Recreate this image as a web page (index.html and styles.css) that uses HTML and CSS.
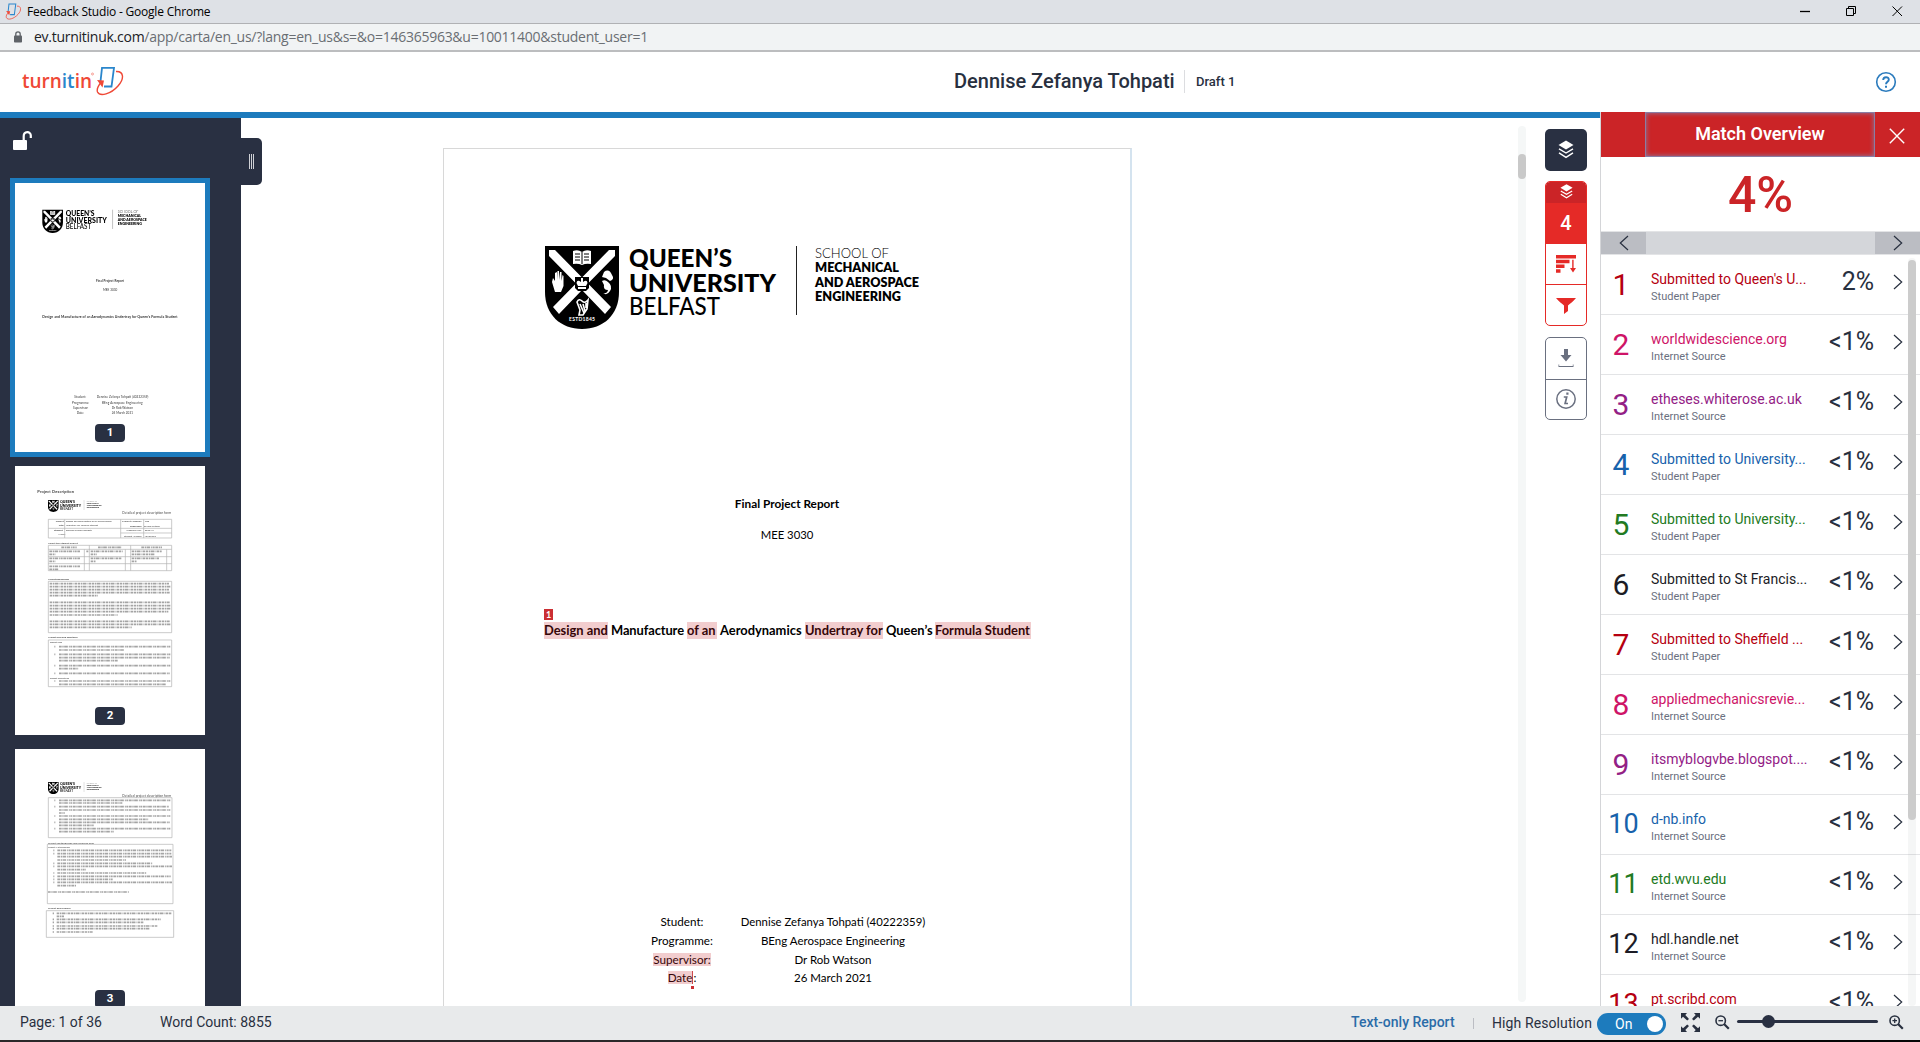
FILE: index.html
```html
<!DOCTYPE html>
<html lang="en">
<head>
<meta charset="utf-8">
<title>Feedback Studio</title>
<link rel="stylesheet" href="styles.css">
</head>
<body>
<svg class="defs" width="0" height="0" aria-hidden="true">
  <defs>
    <symbol id="crest" viewBox="0 0 74 83" overflow="visible">
      <path d="M0 0H74V46C74 69 58 83 37 83S0 69 0 46Z" fill="#000"/>
      <path d="M4 4H10L37 31.500L64 4H70V10L43 37.500L66 61L60 68L37 44L14 68L8 61L31 37.500L4 10Z" fill="#fff"/>
      <path d="M30 31H44V42L41 45H33L30 42Z" fill="#000"/>
      <path d="M31.500 37Q32 33 36 36V32H38V36Q42 33 42.500 37L41 40H33ZM33 41H41V43H33Z" fill="#fff"/>
      <path d="M28 5Q33 3 37 6Q41 3 46 5V18Q41 17 37 19Q33 17 28 18Z" fill="#fff"/>
      <path d="M37 6V18M30 8H35M30 11H35M30 14H35M39 8H44M39 11H44M39 14H44" stroke="#000" stroke-width="1"/>
      <path d="M10 46L7 36L8 32L10 35V27L12 26V34L12.500 25H14V34L15 26H16.500V35L17.500 29L18.500 30V40L16 46Z" fill="#fff"/>
      <path d="M59 26Q64 22 67 29Q70 33 65 35L61 32L57 31ZM57 35Q60 33 63 36Q68 40 65 45Q62 50 58 47Q62 48 63 44Q58 44 59 39Z" fill="#fff"/>
      <path d="M32 56Q34 52 37 55T43 54L42 63L38 69H34L35 64ZM35 58L39 67M38 58L40 65M41 57V62" fill="none" stroke="#fff" stroke-width="1.600"/>
      <text x="24" y="74.500" font-size="5" font-weight="700" fill="#fff" textLength="26">ESTD1845</text>
    </symbol>
    <symbol id="university" viewBox="0 0 374 83" overflow="visible">
      <use href="#crest" width="74" height="83"/>
      <g font-family="Lato, sans-serif" fill="#000">
        <text x="84" y="21" font-size="25.500" font-weight="900" textLength="103" lengthAdjust="spacingAndGlyphs">QUEEN’S</text>
        <text x="84" y="46" font-size="25.500" font-weight="900" textLength="147" lengthAdjust="spacingAndGlyphs">UNIVERSITY</text>
        <text x="84" y="69" font-size="24.500" font-weight="500" textLength="91" lengthAdjust="spacingAndGlyphs">BELFAST</text>
        <text x="270" y="12" font-size="13.500" font-weight="300" textLength="74" lengthAdjust="spacingAndGlyphs">SCHOOL OF</text>
        <text x="270" y="26" font-size="13" font-weight="800" textLength="84" lengthAdjust="spacingAndGlyphs">MECHANICAL</text>
        <text x="270" y="40.500" font-size="13" font-weight="800" textLength="104" lengthAdjust="spacingAndGlyphs">AND AEROSPACE</text>
        <text x="270" y="54.500" font-size="13" font-weight="800" textLength="86" lengthAdjust="spacingAndGlyphs">ENGINEERING</text>
      </g>
      <path d="M251.500 0V69" stroke="#222" stroke-width="1"/>
    </symbol>
    <symbol id="swirl" viewBox="0 0 28 30">
      <path d="M4.500 15.500L6 1.800H18L15.500 20.500H8" fill="none" stroke="#2a86cc" stroke-width="1.800"/>
      <path d="M20 5.500C28 5 28.500 13 22 20C15 28 4 31 1.500 26C.5 23 2 20 5 16.500" fill="none" stroke="#ef4836" stroke-width="1.400"/>
      <path d="M1 14L8 14.500L6.500 21.500Z" fill="#ef4836"/>
    </symbol>
    <symbol id="layers" viewBox="0 0 16 18">
      <path d="M8 0L15.500 4.500L8 9L.5 4.500Z" fill="#fff"/>
      <path d="M1 8.300L8 12.500L15 8.300M1 12.300L8 16.800L15 12.300" fill="none" stroke="#fff" stroke-width="1.400"/>
    </symbol>
    <symbol id="next" viewBox="0 0 10 16"><path d="M1 1L8.700 8L1 15" fill="none" stroke="#28303f" stroke-width="1.200"/></symbol>
  </defs>
</svg>

<div class="titlebar">
  <svg class="favicon"><use href="#swirl"/></svg>
  <span class="window-title">Feedback Studio - Google Chrome</span>
  <svg class="window-buttons" width="110" height="20" viewBox="0 0 110 20" fill="none" stroke="#000">
    <path d="M4 10.500H14" stroke-width="1.300"/>
    <path d="M50.500 7.500H57.500V14.500H50.500ZM52.500 7.500V5.500H59.500V12.500H57.500"/>
    <path d="M96.500 5.500L106 15M106 5.500L96.500 15"/>
  </svg>
</div>
<div class="urlbar">
  <svg width="10" height="12" viewBox="0 0 10 12"><rect x="1" y="4.500" width="8" height="7" rx=".8" fill="#5f6368"/><path d="M2.800 5V3a2.200 2.200 0 0 1 4.400 0V5" fill="none" stroke="#5f6368" stroke-width="1.300"/></svg>
  <span class="url"><b>ev.turnitinuk.com</b>/app/carta/en_us/?lang=en_us&amp;s=&amp;o=146365963&amp;u=10011400&amp;student_user=1</span>
</div>

<header class="header">
  <svg class="brand" width="104" height="32" viewBox="0 0 104 32">
    <text x="0" y="22" font-family="Open Sans, sans-serif" font-size="20" font-weight="600" fill="#ef4836" textLength="70" lengthAdjust="spacingAndGlyphs">turn<tspan fill="#2a86cc">it</tspan>in</text>
    <circle cx="70.500" cy="8" r="1" fill="none" stroke="#ef4836" stroke-width=".5"/>
    <use href="#swirl" x="74" y="0" width="28" height="30"/>
  </svg>
  <div class="doc-name"><h1>Dennise Zefanya Tohpati</h1><span>Draft 1</span></div>
  <svg class="help" width="22" height="22" viewBox="0 0 22 22" fill="none" stroke="#2b7bbd"><circle cx="11" cy="11" r="9.300" stroke-width="1.600"/><path d="M8.200 9C8.200 5.200 13.900 5.400 13.800 8.700C13.700 10.800 11 10.800 11 13.300" stroke-width="1.900"/><path d="M11 14.800V16.800" stroke-width="2"/></svg>
</header>

<main class="workspace">
  <aside class="thumbs">
    <svg class="lock" width="20" height="20" viewBox="0 0 20 20"><rect x="0" y="9" width="14" height="10" rx="1" fill="#fff"/><path d="M10.700 9V5.200C10.700 0 17.800 0 17.800 4.500V7" fill="none" stroke="#fff" stroke-width="2.200"/></svg>
    <div class="thumb selected">
      <svg width="190" height="269" viewBox="0 0 190 269" font-family="Lato, sans-serif" fill="#333">
        <use href="#university" x="27.300" y="26.700" width="104.500" height="23.200"/>
        <g transform="translate(-15 -73) scale(.33333)" font-size="9">
          <text x="288" y="517" font-weight="700" textLength="84">Final Project Report</text>
          <text x="309" y="543" textLength="43">MEE 3030</text>
          <text x="127" y="623" font-weight="700" font-size="10.500" textLength="406">Design and Manufacture of an Aerodynamics Undertray for Queen’s Formula Student</text>
          <text x="223" y="865" textLength="36">Student:</text><text x="290" y="865" textLength="155">Dennise Zefanya Tohpati (40222359)</text>
          <text x="216" y="881" textLength="52">Programme:</text><text x="306" y="881" textLength="122">BEng Aerospace Engineering</text>
          <text x="219" y="897" textLength="46">Supervisor:</text><text x="335" y="897" textLength="64">Dr Rob Watson</text>
          <text x="230" y="912" textLength="22">Date:</text><text x="335" y="912" textLength="64">26 March 2021</text>
        </g>
      </svg>
      <span class="page-no">1</span>
    </div>
    <div class="thumb">
      <svg width="190" height="269" viewBox="0 0 190 269" font-family="Lato, sans-serif" fill="#444">
        <use href="#university" x="33" y="34" width="53.600" height="12"/>
        <g transform="translate(-15 -16) scale(.33333)" font-size="9.500">
          <text x="112" y="130" font-weight="700" font-size="12" textLength="110">Project Description</text>
          <text x="367" y="193" textLength="146">Detailed project description form</text>
          <g font-size="7.500">
            <text x="167" y="217" font-weight="700">Project</text><text x="176" y="227" font-weight="700">Title:</text>
            <text x="198" y="217" textLength="137">Design and manufacture of an aerodynamics</text><text x="198" y="227" textLength="96">undertray for formula student</text>
            <text x="366" y="217" font-weight="700" textLength="60">Project Number:</text><text x="435" y="217">306</text>
            <text x="390" y="232" font-weight="700" textLength="36">Supervisor:</text><text x="432" y="232" textLength="48">Dr Rob Watson</text>
            <text x="162" y="244" font-weight="700">Student</text><text x="175" y="255">Name:</text><text x="198" y="244" textLength="77">Dennise Zefanya Tohpati</text>
            <text x="378" y="244" textLength="46">Academic year:</text><text x="434" y="244">2020-21</text>
            <text x="372" y="260" textLength="54">Student Number:</text><text x="433" y="260">40222359</text>
            <text x="145" y="282" font-weight="700" textLength="88">Select the student cohort</text>
            <text x="145" y="389" font-weight="700" textLength="62">Project Background</text>
            <text x="145" y="565" font-weight="700" textLength="88">Project aims and objectives</text>
            <text x="149" y="580" textLength="37">Project Aims</text><text x="149" y="688" textLength="58">Project Objectives</text>
          </g>
          <path class="rule" d="M145 208H515V264H145ZM194 208V264M362 208V264M431 208V264M145 235H515M362 249H515M145 286H515V362H145ZM253 298V362M268 286V362M376 298V362M392 286V362M500 298V362M145 298H515M145 320H515M145 341H515M145 394H515V548H145ZM145 570H515V710H145Z"/>
          <path class="copy" d="M184 292h46M294 292h72M424 292h62M148 304h92M148 313h18M259 304h6M272 304h96M272 313h18M395 304h90M395 313h68M148 325h94M148 334h18M272 325h92M272 334h16M395 325h84M395 334h16M148 349h94M148 358h28
            M149 401h358M149 410h362M149 419h358M149 428h360M149 437h144M149 457h360M149 467h362M149 476h362M149 485h356M149 495h204M149 514h360M149 523h362M149 532h246
            M177 590h334M177 600h196M177 613h334M177 623h332M177 632h176M177 647h334M177 656h58M177 670h332M177 693h334M177 703h320M163 590h3M163 613h3M163 647h3M163 670h3M163 693h3"/>
        </g>
      </svg>
      <span class="page-no">2</span>
    </div>
    <div class="thumb">
      <svg width="190" height="269" viewBox="0 0 190 269" font-family="Lato, sans-serif" fill="#444">
        <use href="#university" x="33" y="33" width="53.600" height="12"/>
        <g transform="translate(-15 -19) scale(.33333)" font-size="7.500">
          <text x="367" y="201" font-size="9.500" textLength="146">Detailed project description form</text>
          <text x="144" y="341" font-weight="700" textLength="138">Project methodology and resource plan</text>
          <text x="144" y="355" textLength="66">Project Methodology</text>
          <text x="144" y="538" font-weight="700" textLength="68">Project Deliverables</text>
          <path class="rule" d="M145 203H516V323H145ZM142 343H519V521H142ZM139 542H521V622H139Z"/>
          <path class="copy" d="M177 211h336M177 219h190M177 230h330M177 240h334M177 249h18M177 258h334M177 268h268M177 277h332M177 286h104M177 296h334M177 305h164M163 211h3M163 230h3M163 258h3M163 277h3M163 296h3
            M172 361h342M172 371h342M172 380h344M172 390h206M172 400h286M172 409h344M172 419h86M172 429h268M172 439h340M172 448h166M172 457h344M172 467h56M160 361h3M160 371h3M160 400h3M160 409h3M160 429h3M160 439h3M160 448h3M160 457h3M144 486h244
            M170 550h344M170 559h22M170 568h312M170 577h260M170 588h302M170 596h278M170 606h108M158 550h4M158 568h4M158 577h4M158 588h4M158 596h4M158 606h4"/>
        </g>
      </svg>
      <span class="page-no">3</span>
    </div>
    <div class="collapse-tab"><i></i><i></i><i></i></div>
  </aside>

  <section class="viewer">
    <article class="page">
      <svg class="letterhead" width="374" height="83"><use href="#university"/></svg>
      <p class="kind">Final Project Report</p>
      <p class="module">MEE 3030</p>
      <p class="title"><mark class="w1">Design and<sup>1</sup></mark><span class="w2">Manufacture</span><mark class="w3">of an</mark><span class="w4">Aerodynamics</span><mark class="w5">Undertray for</mark><span class="w6">Queen’s</span><mark class="w7">Formula Student</mark></p>
      <dl class="details">
        <dt>Student:</dt><dd class="student">Dennise Zefanya Tohpati (40222359)</dd>
        <dt>Programme:</dt><dd>BEng Aerospace Engineering</dd>
        <dt><mark>Supervisor:</mark></dt><dd>Dr Rob Watson</dd>
        <dt><mark class="date">Date</mark>:</dt><dd>26 March 2021</dd>
      </dl>
    </article>
    <div class="doc-scroll"><i></i></div>
    <nav class="tools">
      <div class="tool layers-tool"><svg width="16" height="19"><use href="#layers"/></svg></div>
      <div class="group similarity">
        <div class="tool mini"><svg width="13" height="15"><use href="#layers"/></svg></div>
        <div class="tool score">4</div>
        <div class="tool sources"><svg width="21" height="18" viewBox="0 0 21 18" fill="#e52a27"><path d="M0 0H20V3.500H0ZM0 4.800H13.500V8.300H0ZM0 9.500H8.500V13H0ZM0 14.200H4.500V17.700H0ZM16.200 4.800H17.600V13H20L17 17.500L14 13H16.200Z"/></svg></div>
        <div class="tool"><svg width="20" height="16" viewBox="0 0 20 16" fill="#e52a27"><path d="M0 0H20C17 4 14 5.500 12 7.500V13L8 16V7.500C6 5.500 3 4 0 0Z"/></svg></div>
      </div>
      <div class="group utility">
        <div class="tool"><svg width="16" height="19" viewBox="0 0 16 19" fill="#6a7080"><path d="M6 0H10V6H13.500L8 12.500L2.500 6H6ZM.5 15.500V18H15.500V15.500H14.800V17H1.200V15.500Z"/></svg></div>
        <div class="tool info"><svg width="20" height="20" viewBox="0 0 20 20" fill="none" stroke="#6a7080"><circle cx="10" cy="10" r="9.200" stroke-width="1.500"/><path d="M7.800 8H10.700L9.100 14.500H12" stroke-width="1.700"/><path d="M10.300 4.600H12.500" stroke-width="2.200"/></svg></div>
      </div>
    </nav>
  </section>

  <aside class="matches">
    <div class="matches-head"><h2>Match Overview</h2><svg width="16" height="16" viewBox="0 0 16 16"><path d="M.8.800L15.200 15.200M15.200.800L.8 15.200" stroke="#fff" stroke-width="1.400"/></svg></div>
    <div class="total">4%</div>
    <div class="pager"><span><svg class="prev" width="10" height="16"><use href="#next"/></svg></span><span class="next"><svg width="10" height="16"><use href="#next"/></svg></span></div>
    <ol class="list">
      <li class="red"><b>1</b><div><a>Submitted to Queen's U...</a><small>Student Paper</small></div><em>2%</em><svg class="go"><use href="#next"/></svg></li>
      <li class="pink"><b>2</b><div><a>worldwidescience.org</a><small>Internet Source</small></div><em>&lt;1%</em><svg class="go"><use href="#next"/></svg></li>
      <li class="purple"><b>3</b><div><a>etheses.whiterose.ac.uk</a><small>Internet Source</small></div><em>&lt;1%</em><svg class="go"><use href="#next"/></svg></li>
      <li class="blue"><b>4</b><div><a>Submitted to University...</a><small>Student Paper</small></div><em>&lt;1%</em><svg class="go"><use href="#next"/></svg></li>
      <li class="green"><b>5</b><div><a>Submitted to University...</a><small>Student Paper</small></div><em>&lt;1%</em><svg class="go"><use href="#next"/></svg></li>
      <li class="black"><b>6</b><div><a>Submitted to St Francis...</a><small>Student Paper</small></div><em>&lt;1%</em><svg class="go"><use href="#next"/></svg></li>
      <li class="red"><b>7</b><div><a>Submitted to Sheffield ...</a><small>Student Paper</small></div><em>&lt;1%</em><svg class="go"><use href="#next"/></svg></li>
      <li class="pink"><b>8</b><div><a>appliedmechanicsrevie...</a><small>Internet Source</small></div><em>&lt;1%</em><svg class="go"><use href="#next"/></svg></li>
      <li class="purple"><b>9</b><div><a>itsmyblogvbe.blogspot....</a><small>Internet Source</small></div><em>&lt;1%</em><svg class="go"><use href="#next"/></svg></li>
      <li class="blue wide"><b>10</b><div><a>d-nb.info</a><small>Internet Source</small></div><em>&lt;1%</em><svg class="go"><use href="#next"/></svg></li>
      <li class="green wide"><b>11</b><div><a>etd.wvu.edu</a><small>Internet Source</small></div><em>&lt;1%</em><svg class="go"><use href="#next"/></svg></li>
      <li class="black wide"><b>12</b><div><a>hdl.handle.net</a><small>Internet Source</small></div><em>&lt;1%</em><svg class="go"><use href="#next"/></svg></li>
      <li class="red wide"><b>13</b><div><a>pt.scribd.com</a></div><em>&lt;1%</em><svg class="go"><use href="#next"/></svg></li>
    </ol>
    <div class="list-scroll"><i></i></div>
  </aside>
</main>

<footer class="status">
  <span class="page-count">Page: 1 of 36</span>
  <span class="words">Word Count: 8855</span>
  <span class="text-only">Text-only Report</span>
  <i class="sep"></i>
  <span class="resolution">High Resolution</span>
  <span class="toggle">On<i></i></span>
  <svg class="expand" width="19" height="19" viewBox="0 0 19 19" fill="#28303f"><path id="corner" d="M0 0H6L4.300 1.900L8 5.900L6.200 7.600L2 3.700L0 5.800Z"/><use href="#corner" transform="matrix(-1 0 0 1 19 0)"/><use href="#corner" transform="matrix(1 0 0 -1 0 19)"/><use href="#corner" transform="matrix(-1 0 0 -1 19 19)"/></svg>
  <svg class="zoom-out" width="15" height="15" viewBox="0 0 15 15" fill="none" stroke="#28303f"><circle cx="5.700" cy="5.700" r="4.700" stroke-width="1.600"/><path d="M9 9L13.800 13.800" stroke-width="2.200"/><path d="M3.400 5.700H8" stroke-width="1.300"/></svg>
  <span class="slider"><i></i></span>
  <svg class="zoom-in" width="15" height="15" viewBox="0 0 15 15" fill="none" stroke="#28303f"><circle cx="5.700" cy="5.700" r="4.700" stroke-width="1.600"/><path d="M9 9L13.800 13.800" stroke-width="2.200"/><path d="M3.400 5.700H8M5.700 3.400V8" stroke-width="1.300"/></svg>
</footer>
<div class="desktop-edge"></div>
</body>
</html>
```
FILE: styles.css
```css
* { box-sizing: border-box; }
body { margin: 0; width: 1920px; height: 1042px; overflow: hidden; display: flex; flex-direction: column; background: #fff; font-family: Roboto, sans-serif; color: #28303f; }
.defs { position: absolute; }
svg { display: block; flex: none; }
h1, h2, p, ol, dl, dd { margin: 0; padding: 0; }
ol { list-style: none; }
i, em { font-style: normal; }

/* browser window */
.titlebar { height: 24px; flex: none; display: flex; align-items: center; background: #dee1e6; border-bottom: 1px solid #b0b1b4; padding: 0 14px 0 5px; font-family: "Open Sans", sans-serif; }
.favicon { width: 17px; height: 17px; margin-right: 5px; }
.window-title { font-size: 12px; color: #000; letter-spacing: -0.2px; }
.window-buttons { margin-left: auto; margin-top: -2px; }
.urlbar { height: 28px; flex: none; display: flex; align-items: center; background: #f1f3f4; border-bottom: 2px solid #bcbdbf; padding-left: 13px; font-family: "Open Sans", sans-serif; }
.url { margin-left: 11px; margin-top: -1px; font-size: 14px; color: #6a6e73; letter-spacing: -0.26px; }
.url b { font-weight: 400; color: #202124; }

/* application header */
.header { height: 60px; flex: none; display: flex; align-items: center; padding: 0 23px 0 22px; }
.doc-name { margin: -2px 0 0 828px; display: flex; align-items: center; }
.doc-name h1 { width: 231px; height: 23px; line-height: 23px; border-right: 1px solid #dcdde0; font-size: 20px; font-weight: 500; white-space: nowrap; }
.doc-name span { margin-left: 11px; font-size: 13px; font-weight: 500; }
.help { margin-left: auto; }

.workspace { height: 894px; flex: none; display: flex; }

/* page thumbnails */
.thumbs { width: 241px; flex: none; z-index: 1; border-top: 6px solid #1d7bbd; background: #293042; position: relative; display: flex; flex-direction: column; gap: 4px; padding: 12px 0 0 10px; clip-path: inset(0 -30px 0 0); }
.lock { margin: 1px 0 23px 3px; }
.thumb { width: 200px; height: 279px; flex: none; border: 5px solid transparent; background: #fff; background-clip: padding-box; position: relative; }
.thumb.selected { border-color: #1d7bbd; }
.thumb svg { filter: blur(.3px); }
.page-no { position: absolute; left: 80px; bottom: 10px; width: 30px; height: 18px; border-radius: 4px; background: #293042; color: #fff; font-size: 11.500px; line-height: 17px; font-weight: 700; text-align: center; }
.rule { fill: none; stroke: #b0b0b0; stroke-width: 2; }
.copy { fill: none; stroke: #a4a4a4; stroke-width: 5; stroke-dasharray: 8 2 4 1.500 11 3 3 1.500 6 2; }
.collapse-tab { position: absolute; left: 241px; top: 20px; width: 21px; height: 47px; border-radius: 0 5px 5px 0; background: #293042; display: flex; gap: 1px; padding: 16px 0 0 8px; }
.collapse-tab i { width: 1px; height: 15px; background: #cfd1d6; }

/* document viewer */
.viewer { width: 1359px; flex: none; border-top: 6px solid #1d7bbd; display: flex; overflow: hidden; padding-left: 202px; }
.page { width: 689px; height: 900px; flex: none; margin-top: 30px; border: 1px solid #d8d8d8; border-right: 2px solid #d4e3ef; font-family: Lato, sans-serif; color: #000; padding: 97px 0 0 100px; }
.letterhead { overflow: visible; margin-left: 1px; }
.kind, .module { width: 486px; text-align: center; line-height: 20px; }
.kind { margin-top: 165px; font-size: 11.800px; font-weight: 700; }
.module { margin-top: 11px; font-size: 11.300px; }
mark { background: #f2cdce; color: #350608; }
.title { display: flex; margin-top: 77px; height: 17px; line-height: 17px; font-size: 12.900px; font-weight: 700; white-space: nowrap; }
.title > * { display: block; flex: none; }
.title mark { height: 17px; position: relative; }
.title sup { position: absolute; left: 0; top: -13px; width: 9px; height: 11px; line-height: 11px; font-size: 9px; background: #cb2f33; color: #fff; text-align: center; }
.w1 { width: 64px; margin-right: 3px; }
.w2 { width: 76px; letter-spacing: -0.1px; }
.w3 { width: 30px; margin-right: 3px; }
.w4 { width: 85px; }
.w5 { width: 78px; margin-right: 3px; }
.w6 { width: 49px; }
.w7 { width: 96px; }
.details { display: grid; grid-template-columns: 74px 186px; column-gap: 21px; grid-auto-rows: 18.800px; margin: 273px 0 0 101px; line-height: 19px; font-size: 11.700px; text-align: center; white-space: nowrap; }
.details dd { font-size: 11.500px; }
.details .student { font-size: 11.350px; }
.details mark { display: inline-block; height: 13px; line-height: 13px; }
.date { border-right: 1px solid #cb4a4d; position: relative; }
.date::after { content: ""; position: absolute; right: -2px; bottom: -5px; width: 3px; height: 3px; background: #cb2f33; }
.doc-scroll { width: 8px; height: 876px; margin: 8px 0 0 386px; flex: none; background: #f5f7f7; border-radius: 4px; padding-top: 28px; }
.doc-scroll i { display: block; height: 25px; border-radius: 4px; background: #c9c9c9; }
.tools { margin: 11px 0 0 19px; width: 42px; flex: none; }
.tool { display: flex; align-items: center; justify-content: center; height: 41px; }
.layers-tool { height: 42px; background: #293042; border-radius: 5px; padding-bottom: 1px; }
.group { border: 1px solid; border-radius: 5px; overflow: hidden; }
.similarity { margin-top: 10px; height: 145px; border-color: #e52a27; }
.mini { height: 21px; background: #cb2427; padding-bottom: 2px; }
.score { background: #e52a27; color: #fff; font-size: 20px; font-weight: 500; padding-bottom: 1px; }
.sources { border-bottom: 1px solid #e52a27; }
.utility { margin-top: 11px; height: 83px; border-color: #6a7080; }
.info { border-top: 1px solid #6a7080; padding-bottom: 2px; }

/* match overview */
.matches { width: 320px; flex: none; position: relative; overflow: hidden; border-left: 1px solid #d4d5d8; }
.matches-head { height: 45px; margin-left: -1px; padding-left: 45px; background: #cb2427; display: flex; align-items: center; }
.matches-head h2 { width: 230px; height: 45px; line-height: 41px; text-align: center; color: #fff; font-size: 18px; font-weight: 600; border: 1px solid #8a7da5; box-shadow: inset 0 0 5px #8a7da5; margin-right: 14px; }
.matches-head svg { margin-top: 3px; }
.total { height: 74px; line-height: 76px; text-align: center; font-size: 50px; font-weight: 500; color: #cb2427; }
.pager { height: 24px; display: flex; justify-content: space-between; background: #d4d6da; border-top: 1px solid #e3e4e6; border-bottom: 1px solid #e3e4e6; }
.pager span { width: 45px; background: #bbbdc3; display: flex; align-items: center; justify-content: center; }
.prev { transform: scaleX(-1); }
.list li { height: 60px; border-bottom: 1px solid #e3e4e6; display: flex; }
.list b { width: 50px; padding-right: 10px; text-align: center; font-size: 30px; line-height: 60px; font-weight: 400; }
.list div { width: 170px; padding-top: 15px; }
.list a { display: block; font-size: 14px; line-height: 19px; white-space: nowrap; }
.list small { display: block; font-size: 11px; line-height: 15px; color: #6a7080; }
.list em { width: 53px; font-size: 25px; line-height: 54px; text-align: right; color: #28303f; white-space: nowrap; }
.go { width: 10px; height: 16px; margin: 19px 0 0 19px; }
.list .wide b { font-size: 27px; line-height: 58px; padding-right: 5px; }
.red { color: #b50010; } .pink { color: #ce1467; } .purple { color: #932085; }
.blue { color: #1762ab; } .green { color: #227a22; } .black { color: #1c1c26; }
.list-scroll { position: absolute; right: 4px; top: 146px; bottom: 0; width: 8px; padding-top: 2px; border-radius: 4px; background: rgba(120,130,130,.07); }
.list-scroll i { display: block; height: 560px; border-radius: 4px; background: #ccc; }

/* status bar */
.status { height: 34px; flex: none; display: flex; align-items: center; background: #e8eaeb; padding: 0 0 0 20px; font-size: 14px; white-space: nowrap; }
.status > * { flex: none; }
.page-count { width: 140px; padding-bottom: 2px; }
.words { width: 1191px; padding-bottom: 2px; }
.text-only { width: 122px; color: #2b6ca8; font-weight: 500; padding-bottom: 2px; }
.sep { width: 1px; height: 11px; background: #bbbdc3; margin-right: 18px; }
.resolution { width: 105px; letter-spacing: .1px; }
.toggle { width: 69px; height: 22px; margin-top: 2px; border-radius: 11px; background: #1d7bbd; color: #fff; line-height: 21px; padding: 0 3px 0 18px; display: flex; align-items: center; justify-content: space-between; }
.toggle i { width: 16px; height: 16px; border-radius: 8px; background: #fff; }
.expand { margin: -2px 15px 0; }
.zoom-out { margin: -2px 7px 0 0; }
.slider { width: 141px; height: 3px; border-radius: 2px; background: #293042; display: flex; align-items: center; padding-left: 25px; margin-top: -3px; }
.slider i { width: 13px; height: 13px; border-radius: 7px; background: #293042; flex: none; }
.zoom-in { margin: -2px 0 0 11px; }
.desktop-edge { height: 2px; flex: none; background: linear-gradient(90deg, #2b2829, #2b2829 60%, #050505 75%); }
```
